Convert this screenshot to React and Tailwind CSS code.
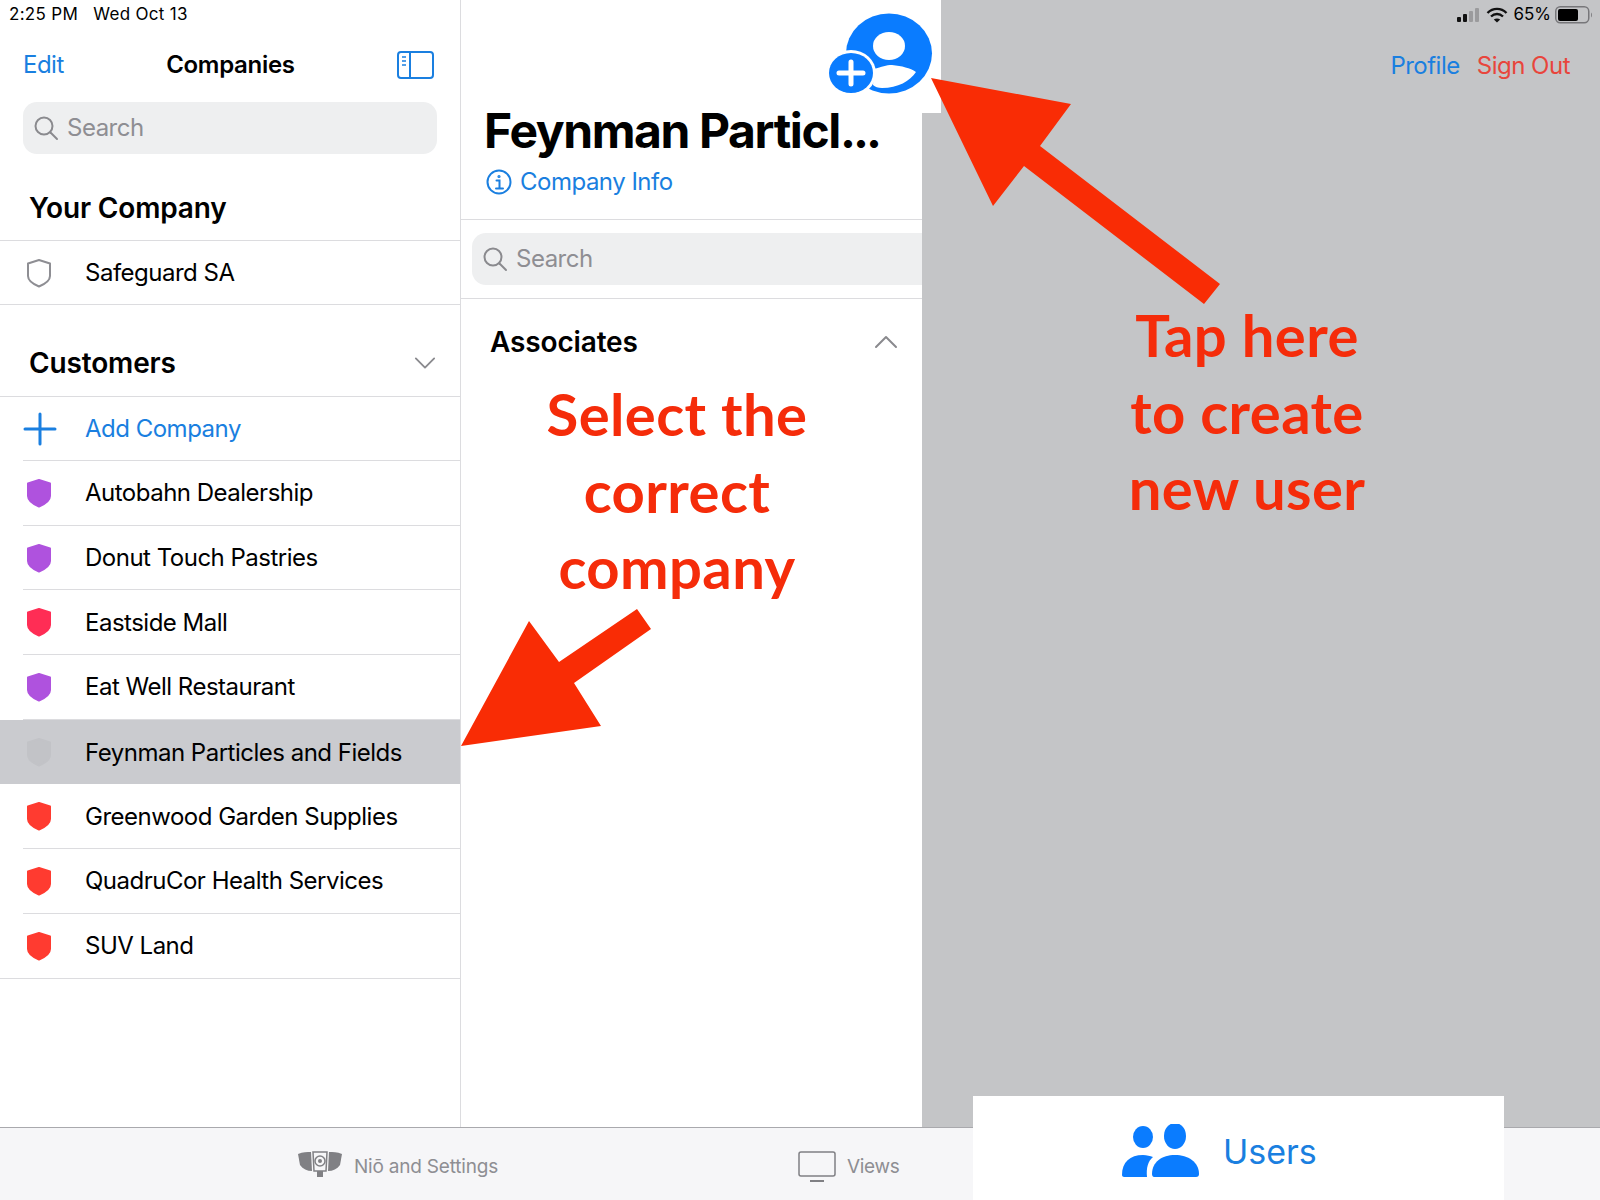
const sans = 'font-["Inter","Liberation_Sans",sans-serif]';
const body = 'text-[24px] tracking-[-0.5px]';

function Shield({ color, outline }) {
  return (
    <svg width="26" height="30" viewBox="0 0 26 30" className="shrink-0">
      <path
        d="M13 2 L24 5.5 V18 C24 22.5 19 26 13 28.5 C7 26 2 22.5 2 18 V5.5 Z"
        fill={outline ? 'none' : color}
        stroke={outline ? '#8e8e93' : color}
        strokeWidth="2"
        strokeLinejoin="round"
      />
    </svg>
  );
}

function SearchBar({ className }) {
  return (
    <div className={`flex h-[52px] items-center gap-2 bg-[#eeeff0] pl-[10px] ${className}`}>
      <svg width="26" height="26" viewBox="0 0 26 26" fill="none" stroke="#8a8a8e" strokeWidth="2" strokeLinecap="round">
        <circle cx="11" cy="11" r="8.5" />
        <path d="M17.5 17.5 L24 24" />
      </svg>
      <span className={`${body} text-[#8e8e93]`}>Search</span>
    </div>
  );
}

function SectionHeader({ title, children }) {
  return (
    <div className="flex items-center justify-between pl-[29px] pr-[24px]">
      <span className="text-[28px] font-semibold leading-[36px] tracking-[-0.15px] text-black">{title}</span>
      {children}
    </div>
  );
}

const customers = [
  { name: 'Autobahn Dealership', color: '#af52de' },
  { name: 'Donut Touch Pastries', color: '#af52de' },
  { name: 'Eastside Mall', color: '#ff2d55' },
  { name: 'Eat Well Restaurant', color: '#af52de' },
  { name: 'Feynman Particles and Fields', color: '#c2c3c7', selected: true },
  { name: 'Greenwood Garden Supplies', color: '#ff3b30' },
  { name: 'QuadruCor Health Services', color: '#ff3b30' },
  { name: 'SUV Land', color: '#ff3b30', last: true },
];

function Row({ item }) {
  return (
    <div className={`h-[64.7px] ${item.selected ? 'bg-[#cacbcf]' : ''} ${item.last ? 'border-b border-[#dcdcdf]' : ''}`}>
      <div className={`ml-[23px] flex h-full items-center ${item.selected || item.last ? '' : 'border-b border-[#dcdcdf]'}`}>
        <div className="w-[62px] shrink-0 pl-[3px]">
          <Shield color={item.color} />
        </div>
        <span className={`${body} pt-[1px] text-black`}>{item.name}</span>
      </div>
    </div>
  );
}

function Sidebar() {
  return (
    <div className="flex w-[461px] shrink-0 flex-col border-r border-[#dcdcdf] bg-white">
      <div className="h-[28px] pl-[9px] pt-[3px] text-[17px] leading-[22px] tracking-[0.3px] text-black">
        2:25 PM &nbsp;&nbsp;Wed Oct 13
      </div>
      <div className="flex h-[74px] items-center justify-between pl-[23px] pr-[25px]">
        <span className={`${body} text-[#1a7fe0]`}>Edit</span>
        <span className="text-[24px] font-semibold tracking-[-0.3px] text-black">Companies</span>
        <svg width="38" height="30" viewBox="0 0 38 30" fill="none" stroke="#1a7fe0" strokeWidth="2">
          <rect x="1" y="2" width="35" height="26" rx="3" />
          <path d="M13 2 V28" />
          <path d="M5 7 H9 M5 11 H9 M5 15 H9" strokeWidth="1.5" />
        </svg>
      </div>
      <SearchBar className="mx-[23px] rounded-[14px]" />
      <div className="pt-[36px]">
        <SectionHeader title="Your Company" />
      </div>
      <div className="mt-[14px] flex h-[65px] items-center border-y border-[#dcdcdf]">
        <div className="w-[85px] shrink-0 pl-[26px]">
          <Shield outline />
        </div>
        <span className={`${body} text-black`}>Safeguard SA</span>
      </div>
      <div className="pt-[40px]">
        <SectionHeader title="Customers">
          <svg width="22" height="14" viewBox="0 0 24 14" fill="none" stroke="#8a8a8e" strokeWidth="2" strokeLinecap="round" strokeLinejoin="round">
            <path d="M2 2 L12 12 L22 2" />
          </svg>
        </SectionHeader>
      </div>
      <div className="mt-[15px] h-[65px] border-t border-[#dcdcdf]">
        <div className="ml-[23px] flex h-full items-center border-b border-[#dcdcdf]">
          <div className="w-[62px] shrink-0">
            <svg width="34" height="34" viewBox="0 0 34 34" stroke="#1a7fe0" strokeWidth="3" strokeLinecap="round">
              <path d="M17 2 V32 M2 17 H32" />
            </svg>
          </div>
          <span className={`${body} text-[#1a7fe0]`}>Add Company</span>
        </div>
      </div>
      {customers.map((item) => (
        <Row key={item.name} item={item} />
      ))}
    </div>
  );
}

function AddUserIcon() {
  return (
    <svg width="108" height="82" viewBox="0 0 108 82" className="block">
      <ellipse cx="63" cy="40.5" rx="43" ry="40" fill="#0a7cff" />
      <ellipse cx="63" cy="33" rx="16" ry="14" fill="white" />
      <path d="M48 56 C56 54 60 52 66 52 C76 53 84 55 90 59 C84 68 72 75 56 75 C52 75 49 74 47 72 Z" fill="white" />
      <ellipse cx="25" cy="60" rx="25" ry="23" fill="white" />
      <ellipse cx="25" cy="60" rx="22" ry="20" fill="#0a7cff" />
      <path d="M25 49 V71 M13 60 H37" stroke="white" strokeWidth="5" strokeLinecap="round" />
    </svg>
  );
}

function MiddleColumn() {
  return (
    <div className="flex w-[461px] shrink-0 flex-col bg-white">
      <div className="h-[220px] border-b border-[#dcdcdf] pl-[23px] pt-[101px]">
        <div className="text-[48px] font-bold leading-[60px] tracking-[-1.4px] text-black">
          Feynman Particl<span className="tracking-[-3px]">...</span>
        </div>
        <div className="mt-[3px] flex items-center gap-[8px] pl-[2px]">
          <svg width="26" height="26" viewBox="0 0 26 26" fill="none" stroke="#1a7fe0" strokeWidth="2" strokeLinecap="round">
            <circle cx="13" cy="13" r="11.5" />
            <circle cx="13" cy="7.5" r="0.6" fill="#1a7fe0" />
            <path d="M10.5 11.5 H13.5 V19 M10 19.5 H17" />
          </svg>
          <span className={`${body} text-[#1a7fe0]`}>Company Info</span>
        </div>
      </div>
      <div className="h-[79px] border-b border-[#dcdcdf] pl-[11px] pt-[13px]">
        <SearchBar className="rounded-l-[14px]" />
      </div>
      <div className="flex h-[86px] items-center justify-between pl-[29px] pr-[24px]">
        <span className="text-[28px] font-semibold leading-[36px] tracking-[-0.15px] text-black">Associates</span>
        <svg width="24" height="14" viewBox="0 0 24 14" fill="none" stroke="#8a8a8e" strokeWidth="2" strokeLinecap="round" strokeLinejoin="round">
          <path d="M2 12 L12 2 L22 12" />
        </svg>
      </div>
    </div>
  );
}

function TabBar() {
  return (
    <div className="relative flex h-[73px] border-t border-[#a9a9ad] bg-[#f6f6f8]">
      <div className="flex w-[796px] items-center justify-end gap-[11px] pr-[298px] pt-[6px] text-[19px] tracking-[-0.2px] text-[#8e8e93]">
        <svg width="46" height="28" viewBox="0 0 46 28" fill="#808084" className="mb-[4px]">
          <path d="M1 3 C6 1 10 1 14 1 L15 20 C10 20 6 18 3 14 Z" />
          <path d="M45 3 C40 1 36 1 32 1 L31 20 C36 20 40 18 43 14 Z" />
          <path d="M16 1 H30 L29 20 H17 Z" fill="none" stroke="#808084" strokeWidth="1.5" />
          <circle cx="23" cy="10" r="5" fill="none" stroke="#808084" strokeWidth="1.5" />
          <circle cx="23" cy="10" r="2" />
          <rect x="20" y="20" width="6" height="6" />
        </svg>
        <span>Niō and Settings</span>
      </div>
      <div className="flex flex-1 items-center gap-[11px] pl-[2px] pt-[6px] text-[19px] tracking-[-0.3px] text-[#8e8e93]">
        <svg width="38" height="32" viewBox="0 0 38 32" fill="none" stroke="#808084" strokeWidth="1.5">
          <rect x="1" y="1" width="36" height="24" rx="2" />
          <path d="M12 30 H26" strokeWidth="2" />
        </svg>
        <span>Views</span>
      </div>
      <div className="absolute bottom-0 left-[973px] flex h-[104px] w-[531px] items-center gap-[22px] bg-white pl-[148px] pt-[6px]">
        <svg width="80" height="54" viewBox="0 0 80 54" fill="#0a7cff">
          <ellipse cx="22" cy="13" rx="10" ry="11" />
          <ellipse cx="54" cy="12" rx="11" ry="13" />
          <path d="M1 51 C1 38 9 31 22 31 C26 31 29 32 32 33 C27 37 25 44 26 53 H3 C2 53 1 52 1 51 Z" />
          <path d="M31 50 C31 38 41 31 54 31 C67 31 78 38 78 50 C78 52 77 53 75 53 H33 C32 53 31 52 31 50 Z" />
        </svg>
        <span className="text-[34px] text-[#1a7fe0]">Users</span>
      </div>
    </div>
  );
}

function Annotation({ lines, className }) {
  return (
    <div className={`absolute flex flex-col items-center font-["Lato",sans-serif] text-[58px] font-bold leading-[76.5px] tracking-[0.4px] text-[#f52c0a] ${className}`}>
      {lines.map((line) => (
        <span key={line}>{line}</span>
      ))}
    </div>
  );
}

export default function App() {
  return (
    <div className={`relative flex h-[1200px] w-[1600px] flex-col overflow-hidden bg-white ${sans}`}>
      <div className="flex flex-1">
        <Sidebar />
        <MiddleColumn />
        <div className="flex-1 bg-[#c4c5c7]">
          <div className="flex h-[28px] items-center justify-end gap-[4px] pr-[7px] pt-[1px] text-[17px] text-black">
            <svg width="24" height="14" viewBox="0 0 24 14">
              <rect x="1" y="9" width="4" height="5" rx="1" fill="#111" />
              <rect x="7" y="6" width="4" height="8" rx="1" fill="#111" />
              <rect x="13" y="3" width="4" height="11" rx="1" fill="#9b9b9d" />
              <rect x="19" y="0" width="4" height="14" rx="1" fill="#9b9b9d" />
            </svg>
            <svg width="22" height="16" viewBox="0 0 22 16" fill="none" stroke="#111" strokeWidth="2.4" className="ml-[2px]">
              <path d="M1.5 6 C7 0.5 15 0.5 20.5 6" />
              <path d="M5 9.5 C8.5 6.2 13.5 6.2 17 9.5" />
              <path d="M11 15.5 L7.8 12.6 C9.6 11 12.4 11 14.2 12.6 Z" fill="#111" stroke="none" />
            </svg>
            <span className="ml-[1px]">65%</span>
            <svg width="38" height="18" viewBox="0 0 38 18" fill="none">
              <rect x="0.75" y="0.75" width="33" height="16" rx="4.5" stroke="#77777a" strokeWidth="1.5" />
              <rect x="3" y="3" width="20" height="12" rx="2" fill="#000" />
              <path d="M36 6.5 C37.2 7.3 37.2 10.7 36 11.5 Z" fill="#77777a" />
            </svg>
          </div>
          <div className="flex h-[74px] items-center justify-end gap-[17px] pr-[30px] pt-[1px]">
            <span className={`${body} text-[#1a7fe0]`}>Profile</span>
            <span className={`${body} text-[#e8453c]`}>Sign Out</span>
          </div>
        </div>
      </div>
      <TabBar />

      {/* the add user button hangs over the edge of the grey panel */}
      <div className="absolute left-[922px] top-0 h-[113px] w-[19px] bg-white" />
      <div className="absolute left-[826px] top-[13px]">
        <AddUserIcon />
      </div>

      <Annotation lines={['Select the', 'correct', 'company']} className="left-[477px] top-[376px] w-[400px]" />
      <Annotation lines={['Tap here', 'to create', 'new user']} className="left-[1047px] top-[297px] w-[400px]" />

      {/* red arrows */}
      <svg width="1600" height="1200" viewBox="0 0 1600 1200" className="pointer-events-none absolute left-0 top-0">
        <polygon points="931,78 1071,104 1040,146 1220,284 1204,304 1024,166 993,206" fill="#f92c05" />
        <polygon points="461,746 529,621 559,662 637,609 651,629 574,683 601,726" fill="#f92c05" />
      </svg>
    </div>
  );
}
